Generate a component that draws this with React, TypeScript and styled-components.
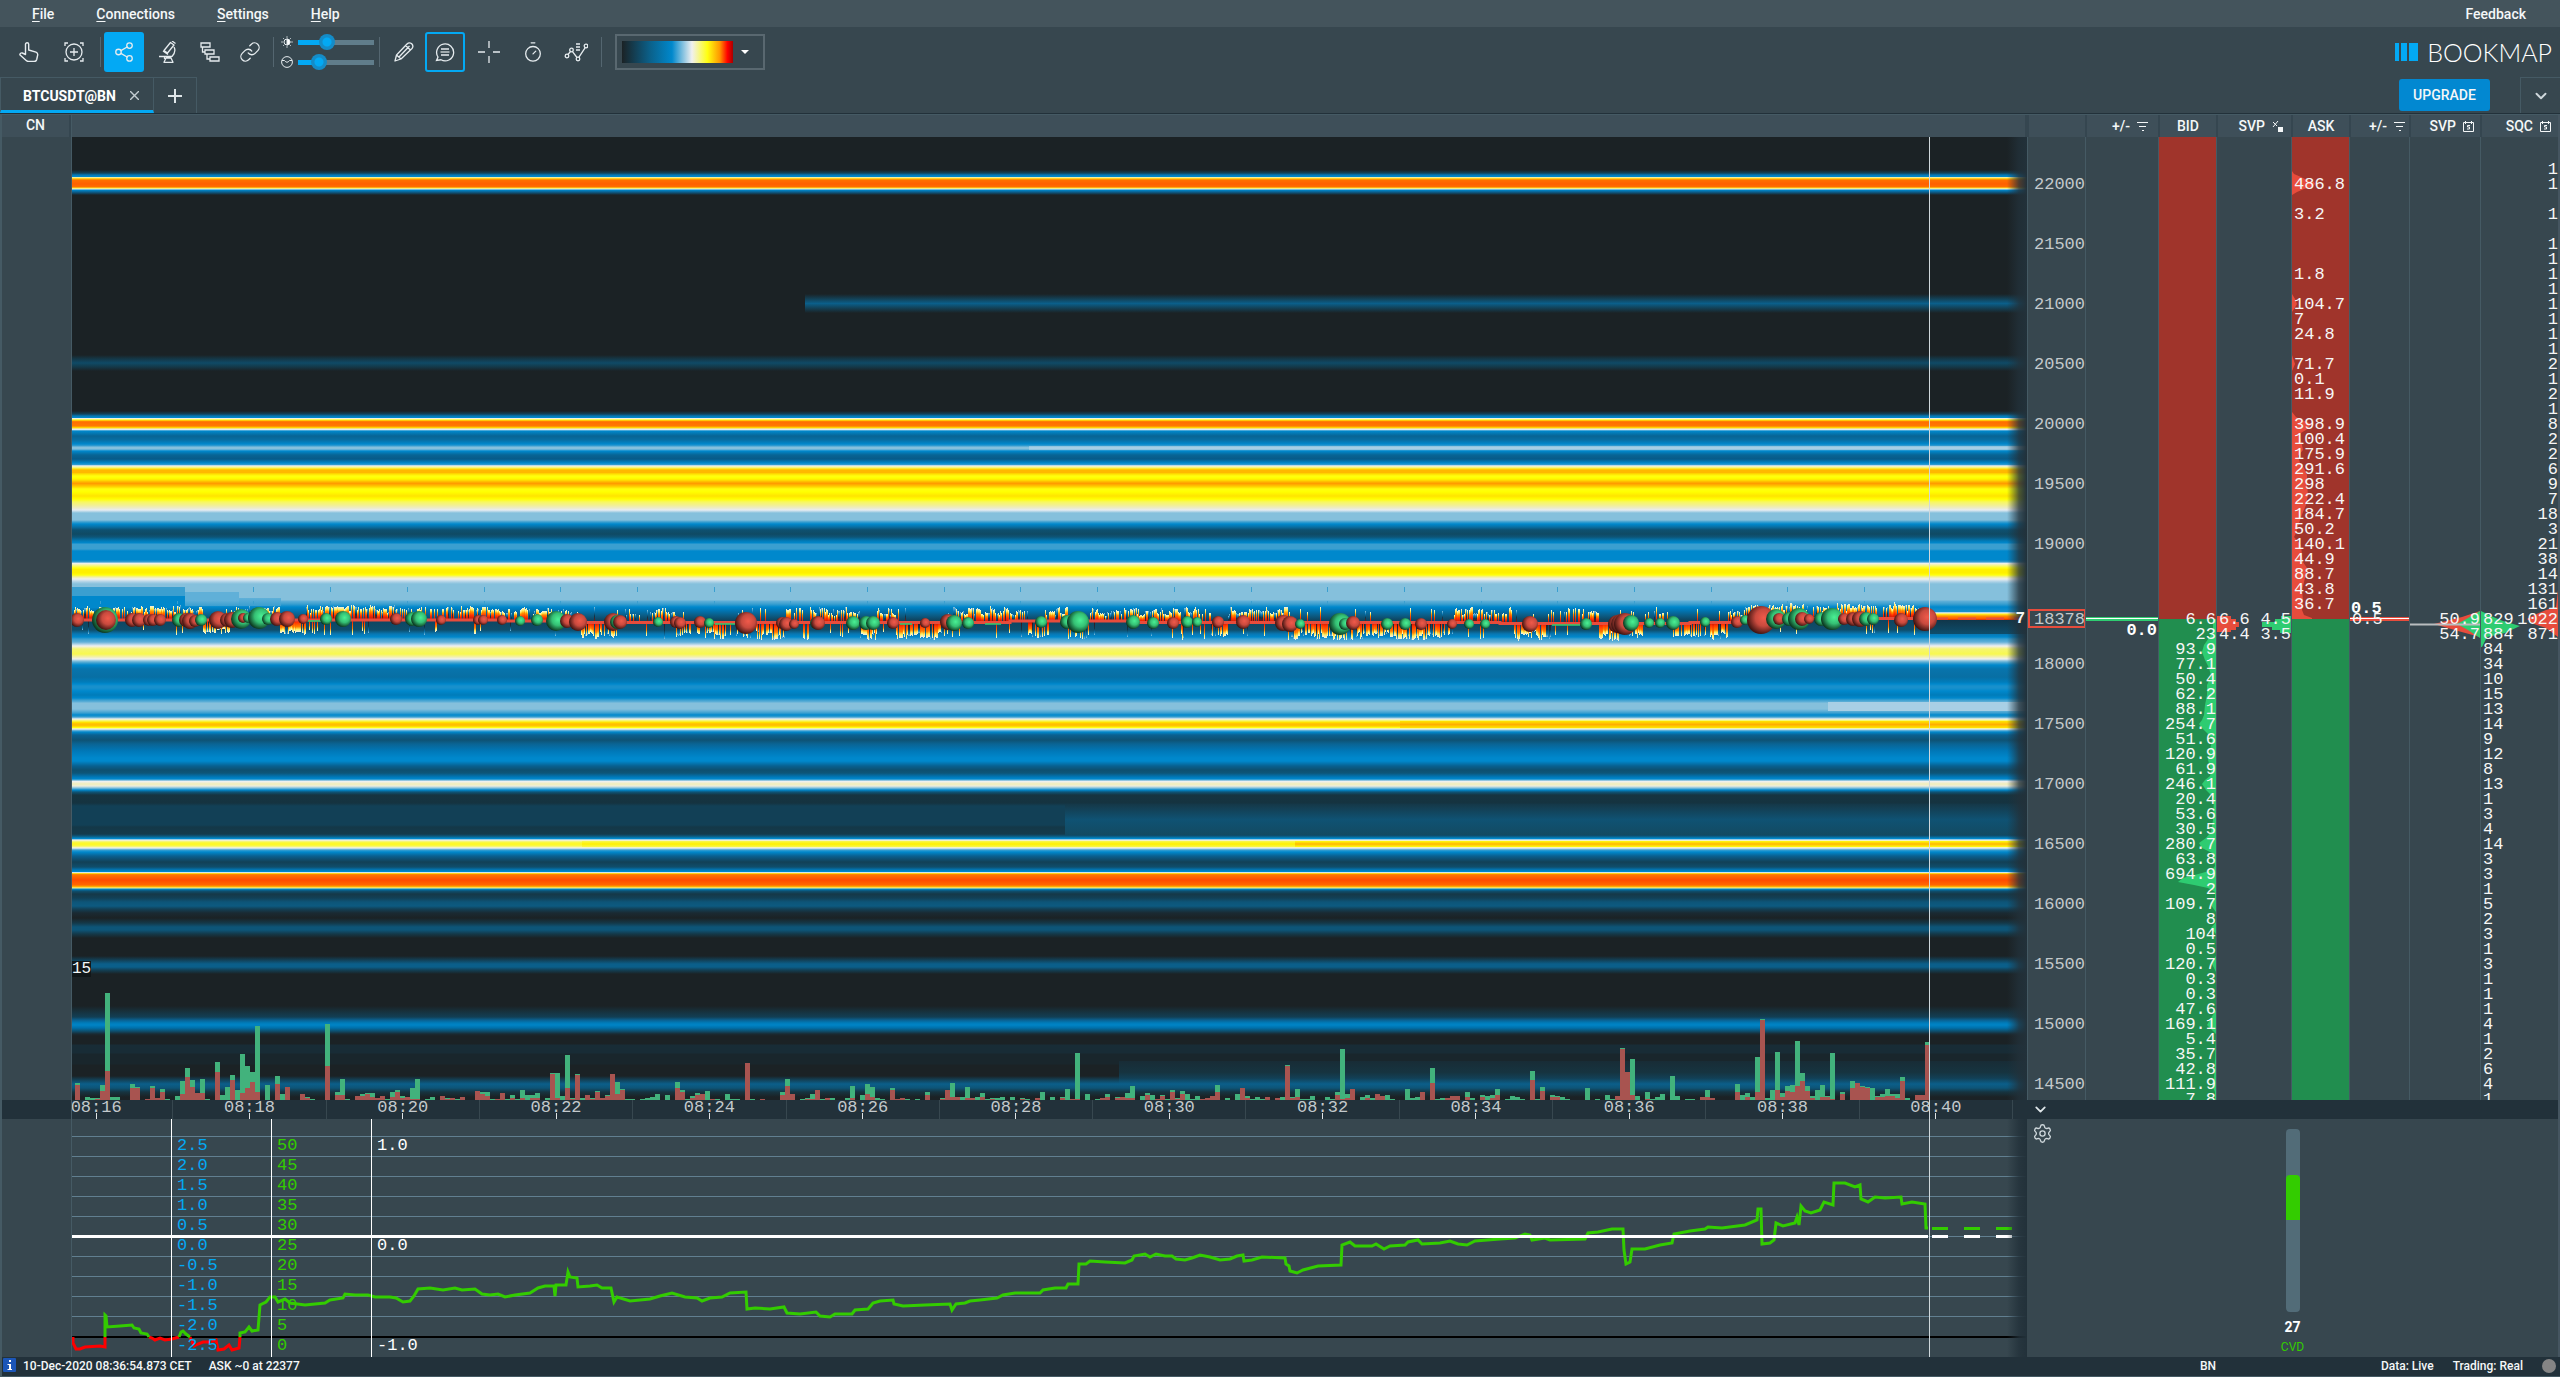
import React from "react";
import styled, { createGlobalStyle, css } from "styled-components";
import { ChevronDown, Link, Share2, Timer, Settings } from "lucide-react";

const color = {
  base: "#37474f",
  menu: "#44545c",
  head: "#3e4f59",
  deep: "#22313a",
  line: "#455a64",
  text: "#f4f7f8",
  dim: "#c3c9cc",
  accent: "#03a9f4",
  red: "#e74c3c",
  redDark: "#a0342b",
  green: "#2ecc71",
  greenDark: "#218e4f",
  cvd: "#33cc00",
};

const mono = `"Liberation Mono", "Courier New", monospace`;
const PRICE_W = 58;
const COLS = [58, 73, 58, 75, 58, 60, 71, 80];

const GlobalStyle = createGlobalStyle`
  * { box-sizing: border-box; }
  body { margin: 0; background: ${color.base}; color: ${color.text}; font: 500 14px/16px Roboto, sans-serif; overflow: hidden; }
  button { font: inherit; color: inherit; background: none; border: 0; padding: 0; cursor: pointer; }
  svg { display: block; }
`;

const Page = styled.div`
  display: flex;
  flex-direction: column;
  height: 100vh;
  background: ${color.base};
`;

const MenuBar = styled.nav`
  display: flex;
  align-items: center;
  height: 27px;
  padding: 0 34px 0 32px;
  gap: 42px;
  background: ${color.menu};
`;
const MenuItem = styled.button<{ $end?: boolean }>`
  margin-left: ${(p) => (p.$end ? "auto" : "0")};
  u { text-underline-offset: 2px; }
`;

const Toolbar = styled.div`
  display: flex;
  align-items: center;
  justify-content: space-between;
  height: 50px;
  padding: 0 8px;
`;
const Tools = styled.div`
  display: flex;
  align-items: center;
`;
const Tool = styled.button<{ $state?: "filled" | "outlined"; $wide?: number }>`
  display: flex;
  align-items: center;
  justify-content: center;
  width: ${(p) => p.$wide ?? 42}px;
  height: 40px;
  color: #e6ecef;
  ${(p) => p.$state && css`width: 40px; border-radius: 3px;`}
  ${(p) => p.$state === "filled" && css`background: ${color.accent};`}
  ${(p) => p.$state === "outlined" && css`border: 2px solid ${color.accent};`}
`;
const Divider = styled.span`
  width: 1px;
  height: 30px;
  margin: 0 3px;
  background: #546670;
`;
const Sliders = styled.div`
  display: flex;
  flex-direction: column;
  gap: 4px;
  padding: 0 2px 0 4px;
`;
const SliderRow = styled.label`
  display: flex;
  align-items: center;
  gap: 5px;
  height: 16px;
`;
const Range = styled.input<{ $fill: number }>`
  appearance: none;
  width: 76px;
  height: 16px;
  margin: 0;
  background: linear-gradient(90deg, ${color.accent} ${(p) => p.$fill}%, #607d8b ${(p) => p.$fill}%) center / 100% 5px no-repeat;
  &::-webkit-slider-thumb {
    appearance: none;
    width: 16px;
    height: 16px;
    border-radius: 50%;
    background: radial-gradient(circle, ${color.accent} 0 4px, #148cc8 5px);
  }
`;
const Palette = styled.button`
  display: flex;
  align-items: center;
  gap: 8px;
  width: 150px;
  height: 36px;
  margin-left: 10px;
  padding: 0 5px;
  border: 2px solid #596870;
`;
const PaletteScale = styled.span`
  width: 111px;
  height: 22px;
  background: linear-gradient(90deg, #1b2225, #0b6089 25%, #0088cc 45%, #f0f0f0 63%, #ffff10 77%, #ff9800 88%, #ff0000 95%, #a80000);
`;
const Caret = styled.span`
  border: 4px solid transparent;
  border-top-color: #fff;
  border-bottom: 0;
`;
const Logo = styled.div`
  display: flex;
  align-items: center;
  gap: 8px;
  font: 300 25px/30px Lato, sans-serif;
  color: #fff;
`;

const TabRow = styled.div`
  display: flex;
  align-items: stretch;
  height: 37px;
  border-bottom: 1px solid ${color.deep};
`;
const Tab = styled.div`
  display: flex;
  align-items: center;
  justify-content: space-between;
  width: 154px;
  padding: 3px 14px 0 22px;
  border: 1px solid ${color.line};
  border-bottom: 3px solid ${color.accent};
  font-weight: 700;
  color: #fff;
`;
const TabClose = styled.button`color: #c3cdd2;`;
const AddTab = styled.button`
  display: flex;
  align-items: center;
  justify-content: center;
  width: 43px;
  border: 1px solid ${color.line};
  border-width: 1px 1px 0 0;
`;
const TabActions = styled.div`
  display: flex;
  gap: 30px;
  margin-left: auto;
`;
const Upgrade = styled.button`
  width: 91px;
  height: 32px;
  margin-top: 2px;
  border-radius: 3px;
  background: #0288d1;
`;
const MoreTabs = styled.button`
  display: flex;
  align-items: center;
  justify-content: center;
  width: 40px;
  border: 1px solid ${color.line};
  border-width: 1px 0 0 1px;
`;

const Workspace = styled.main`
  flex: 1;
  display: grid;
  grid-template: minmax(0, 1fr) 257px / 70px minmax(0, 1fr) 533px;
  min-height: 0;
  border-left: 2px solid ${color.line};
  border-top: 1px solid ${color.line};
`;
const HeaderBar = styled.div`
  height: 22px;
  border-right: 2px solid #354650;
  background: ${color.head};
  text-align: center;
  line-height: 20px;
`;
const Notes = styled.section`
  border-right: 1px solid ${color.line};
`;
const ChartPane = styled.section`
  position: relative;
  display: flex;
  flex-direction: column;
  min-height: 0;
`;
const Plot = styled.svg`
  flex: 1;
  width: 100%;
  min-height: 0;
`;
const Fade = styled.span`
  position: absolute;
  inset: 0 0 0 auto;
  width: 20px;
  background: linear-gradient(90deg, transparent, #22313acc 60%, ${color.deep});
`;
const UpperFade = styled(Fade)`top: 22px;`;
const NowLine = styled.span`
  position: absolute;
  inset: 0 97px 0 auto;
  width: 1px;
  background: #cfd8dc;
`;
const UpperNow = styled(NowLine)`top: 22px;`;
const VolumeMax = styled.span`
  position: absolute;
  left: 0;
  bottom: 123px;
  background: #111719;
  font: 400 16px/16px ${mono};
`;
const LastSize = styled.span`
  position: absolute;
  right: 2px;
  top: 496px;
  font: 700 16px/16px ${mono};
`;

const TimeGutter = styled.div`
  height: 19px;
  background: ${color.deep};
`;
const TimeAxis = styled.div`
  flex: none;
  height: 19px;
  overflow: hidden;
  background: ${color.deep};
`;
const TimeCells = styled.div`
  display: grid;
  grid-template-columns: repeat(13, 1fr);
  height: 100%;
  margin: 0 14px 0 -52px;
`;
const TimeCell = styled.time`
  display: flex;
  justify-content: center;
  border-right: 1px solid #37474f;
  background: linear-gradient(#dfe4e6, #dfe4e6) center bottom / 1px 6px no-repeat;
  font: 400 17px/15px ${mono};
  color: ${color.dim};
`;

const Lower = styled.section`
  position: relative;
  display: flex;
  flex-direction: column;
  min-height: 0;
`;
const Indicator = styled.div`
  position: relative;
  flex: 1;
  display: flex;
  min-height: 0;
`;
const Scales = styled.div`
  position: absolute;
  inset: 0 auto 0 99px;
  display: flex;
`;
const Scale = styled.ol<{ $color: string; $step: number }>`
  width: 100px;
  margin: 0;
  padding: 17px 0 0 5px;
  border-left: 1px solid #fff;
  list-style: none;
  font: 400 17px/20px ${mono};
  color: ${(p) => p.$color};
  li { height: ${(p) => p.$step}px; }
`;

const Ladder = styled.section`
  position: relative;
  overflow: hidden;
  min-height: 0;
  border-right: 2px solid #455560;
`;
const Columns = styled.div`
  position: absolute;
  inset: 22px 0 0 0;
  display: flex;
`;
const ColumnBack = styled.div<{ $w: number; $book?: boolean }>`
  position: relative;
  flex: none;
  width: ${(p) => p.$w}px;
  border-left: 1px solid ${color.line};
  background: ${(p) => (p.$book ? `linear-gradient(${color.redDark} 482px, ${color.greenDark} 482px)` : "none")};
`;
const Profile = styled.svg`
  width: 100%;
  height: 963px;
`;
const Book = styled.table`
  position: relative;
  width: 531px;
  table-layout: fixed;
  border-collapse: collapse;
`;
const Th = styled.th<{ $center?: boolean; $end?: number }>`
  height: 22px;
  padding: 0 ${(p) => p.$end ?? 8}px 0 0;
  border-left: 2px solid #354650;
  background: ${color.head};
  font-weight: 500;
  line-height: 20px;
  text-align: ${(p) => (p.$center ? "center" : "right")};
  ${(p) => p.$center && css`padding: 0;`}
  span { display: inline-flex; align-items: center; gap: 7px; vertical-align: top; }
`;
const Gap = styled.td`height: 25px; padding: 0;`;
const Td = styled.td<{ $align?: string; $dim?: boolean }>`
  height: 15px;
  padding: 0 1px 0 2px;
  font: 400 17px/15px ${mono};
  text-align: ${(p) => p.$align ?? "right"};
  color: ${(p) => (p.$dim ? color.dim : "#f6f6f6")};
  white-space: nowrap;
`;
const Pair = styled.div`
  display: flex;
  justify-content: space-between;
`;
const Marker = styled.div<{ $line: string }>`
  position: absolute;
  top: 480px;
  left: 0;
  width: 100%;
  height: 4px;
  border: solid ${(p) => p.$line};
  border-width: 1px 0 2px;
  background: #fff;
`;
const Delta = styled.strong<{ $side: "left" | "right"; $top: number }>`
  position: absolute;
  ${(p) => p.$side}: 1px;
  top: ${(p) => p.$top}px;
  font: 700 17px/16px ${mono};
  color: #fff;
`;
const PriceBox = styled.span`
  position: absolute;
  top: 472px;
  left: 0;
  width: ${PRICE_W}px;
  height: 19px;
  border: 2px solid ${color.red};
`;

const Widgets = styled.section`
  display: flex;
  flex-direction: column;
  border-right: 2px solid #455560;
`;
const WidgetBar = styled.div`
  display: flex;
  align-items: center;
  height: 19px;
  padding-left: 5px;
  background: ${color.deep};
`;
const WidgetBody = styled.div`
  display: grid;
  grid-template-columns: 30px 1fr 30px;
  flex: 1;
  padding-top: 10px;
`;
const Gear = styled.button`
  align-self: start;
  margin: -6px 0 0 5px;
  color: #cfd8dc;
`;
const GaugeBox = styled.div`
  display: flex;
  flex-direction: column;
  align-items: center;
`;
const GaugeTrack = styled.div`
  display: flex;
  flex-direction: column;
  width: 14px;
  height: 183px;
  padding-top: 46px;
  border-radius: 4px;
  background: #526c78;
`;
const GaugeFill = styled.div`
  height: 45px;
  border-radius: 4px 4px 0 0;
  background: ${color.cvd};
`;
const GaugeValue = styled.strong`
  margin-top: 7px;
  color: #fff;
`;
const GaugeName = styled.span`
  margin-top: 4px;
  font: 400 12px/16px Roboto, sans-serif;
  color: ${color.cvd};
`;

const StatusBar = styled.footer`
  display: grid;
  grid-template-columns: minmax(0, 1fr) 533px;
  align-items: center;
  height: 20px;
  padding-bottom: 2px;
  border: solid ${color.line};
  border-width: 0 0 1px 2px;
  background: ${color.deep};
  font-size: 12px;
  line-height: 16px;
`;
const StatusLeft = styled.div`
  display: flex;
  align-items: center;
  gap: 17px;
  padding-left: 1px;
`;
const Stamp = styled.span`
  display: flex;
  gap: 7px;
`;
const StatusRight = styled.div`
  display: flex;
  align-items: center;
  gap: 19px;
  padding: 0 4px 0 173px;
`;
const Feed = styled.span`margin-right: auto;`;
const Light = styled.span`
  width: 14px;
  height: 14px;
  border-radius: 50%;
  background: #858585;
`;

/* ---------- heat map data ---------- */

const K = "#1b2225", B = "#0088cc", D = "#0d5578", L = "#85c0dc", M = "#3a9fd0", W = "#f0f0f0", Y = "#ffff10";

type Stop = [number, string];
const HEAT: Stop[] = [
  [137, K], [170, K], [173, "#12435a"], [175, "#0878b4"], [176.5, B], [177, W], [178, "#ffe840"], [179, "#ffb400"], [180, "#ff7000"],
  [184, "#ff6000"], [187, "#ff7000"], [188, "#ffe820"], [189, W], [190, B], [192, "#0a6090"], [195, K],
  [355, K], [359, "#143848"], [363, "#0f4a66"], [367, "#143848"], [371, K],
  [411, K], [414, "#12435a"], [416, "#0878b4"], [417.6, B], [418.4, W], [420, Y], [421, "#ff9000"], [422, "#ff6e00"], [426, "#ff7a00"],
  [427.5, "#ffd000"], [429.4, W], [431, B], [436, "#086494"], [440, "#086fa4"], [444, B], [446, M], [447, L], [449, L], [451, B],
  [455, "#086494"], [459, "#085a88"], [463, B], [465, M], [465.7, W], [468, "#f8f860"], [469, "#ffd800"], [470.5, "#ffb800"], [472.5, "#ffb800"], [474, "#ffe000"],
  [476, Y], [478, "#ffff00"], [480, "#ffe400"], [482, "#ffb400"], [483.5, "#ff9c00"], [485, "#ffb400"], [487, "#ffd800"], [489, Y],
  [492, "#ffff00"], [496, "#ffe400"], [499, "#ffff00"], [502, "#f8f860"], [505, "#f2f090"], [508, "#ecebc8"], [510, "#e8edf2"],
  [513, L], [520, L], [522, M], [524, B], [527, "#086fa4"], [530, "#0d5070"], [534, "#0f4a64"], [537, D], [541, "#007cba"], [543, B],
  [544, M], [549, M], [551, B], [560, B], [562, M], [563.3, W], [566, "#f8f870"], [568, Y], [569.5, "#fff000"], [573, "#fff000"], [575, Y],
  [577, "#f2f0a0"], [579, W], [582, "#a8cfe5"], [584, L], [600, L], [601, "#60b0d8"], [604, M], [607, B], [610, "#0078b8"], [615, "#0a5f8a"],
  [620, "#0f4560"], [630, "#0e4e6c"], [634, "#0878b4"], [637, B], [639, M], [642, "#60b0d8"], [644, "#a8cfe5"], [646, W], [649, "#f5f570"],
  [654, "#f8f850"], [657, "#f2f0b0"], [659, W], [661, L], [663, M], [665, B], [669, "#0874ac"], [677, "#086fa4"], [682, "#007cba"], [684, B],
  [686, "#1890cc"], [688, "#1890cc"], [691, B], [695, "#007cba"], [698, B], [700, M], [702, "#60b0d8"], [703, L], [709, L], [711, "#60b0d8"], [713, M], [715, B],
  [717, M], [719, W], [721, "#f8f850"], [722.5, "#ffe000"], [724, "#ffbc00"], [726, "#ffc800"], [727.5, Y], [729, W], [730.5, "#60b0d8"], [732, B],
  [735, "#0a6090"], [740, "#0e5274"], [744, "#0a6494"], [751, "#0078b8"], [758, B], [761, B], [766, "#086090"], [770, "#0d5070"], [773, D],
  [777, "#0078b8"], [779, B], [780, "#60b0d8"], [781.4, W], [784, "#f2eeb8"], [786, "#eeeedd"], [788, L], [790, B], [792, D], [795, "#163440"],
  [803, "#153340"], [806, "#124056"], [825, "#124056"], [827, "#143848"], [834, "#143a4c"], [836, D], [838.5, B], [840, W], [842, "#f8f850"],
  [844, "#fff820"], [846, "#f8f850"], [848, W], [850, M], [852, B], [856, "#0a6090"], [862, "#124056"], [867, "#0f4e6c"], [870, "#0078b8"], [871.6, B],
  [872.6, W], [873.6, "#ffd000"], [874.6, "#ff7800"], [880, "#ff4c00"], [885, "#ff6800"], [886.6, "#ffb000"], [888, "#f5f090"], [889, B],
  [891, "#0d5070"], [894, "#153848"], [898, "#124056"], [902, "#0d5578"], [906, "#0d5a80"], [909, "#124056"], [913, "#1a2a32"], [918, K],
  [923, "#143848"], [927, "#0d5578"], [930, "#0d5578"], [934, "#143848"], [938, K], [956, K], [960, "#124056"], [964, "#0b5f8a"], [967, "#0b5f8a"],
  [970, "#124056"], [974, K], [1006, K], [1011, "#17303b"], [1017, "#123f55"], [1020, "#0a6090"], [1023, "#007cba"], [1025, "#0084c6"],
  [1028, "#0070aa"], [1031, "#0d5070"], [1034, "#1a2a32"], [1036, K], [1044, K], [1045, "#182c36"], [1053, "#182c36"], [1054, "#19262c"],
  [1064, "#19262c"], [1065, K], [1076, K], [1079, "#143a4c"], [1084, "#0b5f8a"], [1088, "#0d5578"], [1092, "#163440"], [1097, K], [1100, K],
];

type Patch = { x: number; w: number; y: number; h: number; stops: Stop[] };
const PATCHES: Patch[] = [
  { x: 805, w: 1222, y: 294, h: 19, stops: [[0, K], [0.25, "#134055"], [0.5, "#0b5f8a"], [0.75, "#134055"], [1, K]] },
  { x: 72, w: 113, y: 587, h: 9, stops: [[0, M], [1, M]] },
  { x: 72, w: 113, y: 596, h: 12, stops: [[0, B], [1, B]] },
  { x: 185, w: 54, y: 592, h: 14, stops: [[0, "#60b0d8"], [0.6, "#60b0d8"], [1, M]] },
  { x: 239, w: 42, y: 598, h: 8, stops: [[0, "#60b0d8"], [1, M]] },
  { x: 1065, w: 962, y: 804, h: 31, stops: [[0, "#153848"], [0.5, "#0f5273"], [1, "#134a62"]] },
  { x: 582, w: 1445, y: 841, h: 6, stops: [[0, "#f8f850"], [0.5, "#fff000"], [1, "#f8f850"]] },
  { x: 1295, w: 732, y: 841, h: 6, stops: [[0, Y], [0.5, "#ffb800"], [1, Y]] },
  { x: 1400, w: 627, y: 721, h: 7, stops: [[0, "#ffe800"], [0.5, "#ffae00"], [1, "#ffe800"]] },
  { x: 1029, w: 998, y: 446, h: 4, stops: [[0, L], [0.5, "#b0d4e8"], [1, L]] },
  { x: 1828, w: 199, y: 702, h: 9, stops: [[0, "#a8cfe5"], [1, "#a8cfe5"]] },
  { x: 1119, w: 908, y: 1061, h: 23, stops: [[0, "#182c36"], [0.5, "#163440"], [0.75, "#124056"], [1, "#0b5f8a"]] },
  { x: 1930, w: 97, y: 607, h: 13, stops: [[0, B], [0.35, "#1890cc"], [0.45, W], [0.55, "#ffee20"], [0.7, "#ff9000"], [0.95, "#ff4c00"], [1, "#8a1008"]] },
  { x: 1930, w: 97, y: 620, h: 14, stops: [[0, "#10364a"], [1, "#0e4e6c"]] },
];

/* price line: level drifts down after 08:22 and recovers after 08:37 */
const priceAt = (x: number) => (x < 500 ? 619 : x < 585 ? 621 : x < 1745 ? 622 : 618);

const makeRandom = (seed: number) => () => {
  seed = (seed * 1664525 + 1013904223) % 4294967296;
  return seed / 4294967296;
};

type Streak = { x: number; y: number; w: number; h: number; fill: string };
const STREAKS: Streak[] = (() => {
  const rnd = makeRandom(41);
  const out: Streak[] = [];
  let x = 74;
  while (x < 1926) {
    const run = 5 + rnd() * 24;
    const dense = rnd() > 0.3 ? 0.95 : 0.5;
    const above = rnd() > (x < 560 || x > 1745 ? 0.2 : 0.5);
    let level = 8 + rnd() * 4;
    for (let end = Math.min(x + run, 1926); x < end; x += 1) {
      if (rnd() > dense) continue;
      const y = priceAt(x);
      const up = rnd() > 0.06 ? above : !above;
      if (rnd() > 0.6) level = 6 + rnd() * (x < 560 ? 6 : 8);
      const h = Math.round(level + rnd() * 2);
      const cool = rnd() > 0.78;
      out.push({ x: Math.round(x), w: 1, y: up ? y - h : y, h: up ? h : h + 3, fill: up ? (cool ? "coolUp" : "hotUp") : cool ? "coolDown" : "hotDown" });
    }
  }
  return out;
})();

/* x, y, radius, side: trades drawn as spheres */
type Ball = [number, number, number, "r" | "g"];
const BALLS: Ball[] = [
  [77, 620, 7, "r"], [105, 620, 13, "g"], [106, 620, 10, "r"], [132, 620, 7, "r"], [139, 620, 7, "r"], [149, 620, 6, "r"], [153, 620, 6, "r"], [160, 620, 6, "r"],
  [179, 620, 7, "g"], [186, 620, 7, "r"], [190, 621, 8, "r"], [195, 621, 6, "r"], [201, 620, 6, "g"], [218, 620, 9, "r"], [227, 620, 7, "r"], [232, 620, 8, "r"],
  [241, 619, 10, "g"], [243, 618, 5, "r"], [248, 618, 5, "g"], [259, 618, 11, "g"], [268, 619, 6, "g"], [277, 619, 7, "r"], [287, 619, 8, "r"], [303, 619, 5, "r"],
  [326, 619, 6, "g"], [343, 619, 8, "g"], [396, 619, 6, "r"], [412, 619, 7, "g"], [419, 619, 8, "g"], [441, 620, 5, "r"], [478, 620, 5, "r"], [483, 620, 5, "r"],
  [502, 620, 5, "r"], [520, 621, 5, "g"], [537, 620, 6, "g"], [556, 621, 10, "g"], [567, 621, 7, "r"], [578, 622, 9, "r"], [613, 622, 9, "r"], [617, 622, 7, "g"],
  [620, 622, 7, "r"], [658, 622, 5, "g"], [676, 622, 6, "r"], [680, 623, 6, "r"], [700, 622, 6, "r"], [709, 623, 5, "g"], [746, 623, 11, "r"], [782, 623, 6, "r"],
  [786, 624, 7, "r"], [794, 624, 5, "r"], [816, 623, 6, "g"], [818, 623, 7, "r"], [853, 623, 7, "g"], [866, 623, 7, "g"], [873, 623, 7, "g"], [893, 623, 6, "r"],
  [925, 623, 5, "r"], [948, 622, 8, "r"], [954, 623, 8, "g"], [968, 623, 6, "g"], [1041, 622, 6, "g"], [1067, 622, 7, "g"], [1078, 622, 11, "g"], [1133, 622, 7, "g"],
  [1153, 623, 6, "g"], [1173, 623, 6, "r"], [1187, 622, 6, "g"], [1197, 622, 5, "g"], [1218, 622, 6, "r"], [1243, 622, 7, "r"], [1283, 623, 8, "r"], [1290, 624, 8, "r"],
  [1300, 624, 5, "g"], [1340, 624, 11, "g"], [1345, 624, 6, "g"], [1353, 623, 7, "r"], [1387, 624, 6, "g"], [1405, 624, 6, "g"], [1421, 624, 6, "r"], [1452, 624, 5, "r"],
  [1469, 624, 5, "g"], [1485, 624, 5, "g"], [1530, 624, 8, "r"], [1586, 624, 6, "g"], [1617, 624, 9, "r"], [1621, 624, 10, "r"], [1625, 624, 11, "r"], [1631, 623, 8, "g"],
  [1649, 623, 5, "g"], [1660, 623, 5, "g"], [1673, 623, 7, "g"], [1705, 622, 5, "g"], [1737, 622, 6, "r"], [1745, 620, 5, "g"], [1761, 620, 14, "r"], [1776, 619, 10, "g"],
  [1779, 619, 6, "r"], [1789, 619, 7, "g"], [1799, 619, 11, "g"], [1802, 619, 7, "r"], [1809, 619, 5, "r"], [1821, 619, 7, "g"], [1832, 619, 11, "g"], [1844, 619, 6, "r"],
  [1853, 619, 7, "r"], [1860, 619, 8, "r"], [1866, 619, 7, "g"], [1873, 619, 6, "g"], [1901, 620, 7, "r"], [1925, 619, 12, "r"],
];

/* x:total height:sell height, five-second buckets */
const VOLUME = `75:17:15 85:3:0 90:2:0 95:2:1 100:15:9 105:107:29 110:3:0 115:3:0 130:16:12 135:13:12 145:1:1 150:14:12 155:2:2 160:11:8 165:1:0 175:4:0 180:19:6 185:32:23
190:20:13 195:7:7 200:21:7 205:1:0 215:38:28 220:5:0 225:13:0 230:25:20 235:10:0 240:46:7 245:34:12 250:28:18 255:74:8 265:15:0 275:24:16 280:6:0 285:13:13 300:6:6 305:3:2 310:1:0
325:76:34 335:8:5 340:21:5 345:1:0 355:4:4 360:6:4 365:7:6 370:7:3 375:2:2 380:4:4 385:1:0 390:8:3 395:10:8 400:4:2 405:3:3 410:12:1 415:21:1 425:1:0 430:3:0 440:4:4 445:2:1 450:2:2 455:1:0
460:3:3 475:9:9 480:8:6 485:8:4 490:1:0 495:1:1 500:7:7 505:1:0 510:5:2 515:1:0 520:10:2 525:5:0 530:5:2 535:7:2 545:2:0 550:27:26 555:27:2 560:4:0 565:45:12 570:2:1 575:26:25 580:2:0 585:5:5
590:2:1 595:9:8 600:2:2 605:5:4 610:26:26 615:18:6 620:11:10 625:1:0 630:1:0 640:1:0 645:2:0 650:3:0 655:6:0 665:5:0 675:18:12 680:10:8 685:1:0 690:4:2 695:7:5 700:6:6 705:9:0 710:1:1 715:1:0
725:6:0 730:1:0 735:1:0 745:37:37 750:1:0 760:1:1 780:8:5 785:21:14 790:6:6 800:1:0 805:2:1 810:6:1 815:10:10 820:1:0 825:2:2 830:2:0 845:2:0 850:14:2 860:5:0 865:16:6 870:13:3 875:2:0 880:1:0
890:12:10 895:1:1 900:2:2 905:1:0 915:1:0 925:8:5 940:2:1 945:10:10 950:17:3 955:3:3 960:3:0 965:13:2 970:2:2 975:3:0 980:7:3 985:1:0 990:2:1 995:2:0 1000:3:0 1010:3:0 1020:2:1 1025:1:0 1035:2:2
1040:8:0 1050:3:0 1060:3:2 1065:11:0 1070:1:1 1075:47:1 1085:6:0 1095:1:0 1100:2:2 1105:6:3 1115:3:2 1120:3:3 1125:7:2 1130:14:2 1140:4:0 1145:7:5 1150:5:0 1155:1:1 1160:5:4 1165:1:0 1170:10:8
1175:2:1 1180:9:6 1185:6:0 1190:1:0 1195:4:0 1200:1:1 1205:2:2 1210:4:4 1215:15:8 1225:2:0 1235:6:0 1240:12:12 1245:4:2 1250:1:0 1255:3:0 1260:1:0 1265:3:3 1275:2:2 1280:3:0 1285:35:34 1290:3:2
1295:11:3 1300:1:0 1305:1:0 1310:4:0 1325:3:0 1330:1:0 1335:8:5 1340:51:1 1345:6:2 1350:11:11 1360:3:0 1365:5:2 1370:2:0 1375:6:6 1380:4:4 1385:5:0 1390:1:0 1405:11:0 1410:2:0 1415:3:0 1420:8:8
1430:32:17 1435:1:0 1440:2:0 1445:2:2 1450:4:4 1455:4:4 1465:8:3 1470:2:0 1480:5:3 1485:4:0 1490:5:2 1495:11:5 1505:1:0 1510:4:0 1515:3:0 1520:1:0 1530:29:20 1535:1:0 1540:13:9 1550:5:3 1555:4:3
1560:3:0 1565:1:0 1585:12:0 1595:1:0 1605:5:0 1610:1:0 1615:4:4 1620:52:51 1625:28:28 1630:41:5 1635:4:0 1645:8:1 1650:1:0 1655:3:0 1660:6:0 1670:24:0 1675:4:0 1685:1:0 1690:1:0 1700:3:3 1705:10:3
1710:2:2 1735:16:8 1740:5:0 1745:7:3 1750:3:0 1755:43:8 1760:81:80 1765:2:0 1770:10:0 1775:48:10 1780:7:3 1785:14:9 1790:15:8 1795:59:14 1800:27:19 1805:14:9 1810:4:2 1815:10:0 1820:15:3 1825:4:3
1830:47:1 1840:8:6 1850:19:12 1855:17:17 1860:14:13 1865:13:12 1870:12:0 1875:4:3 1880:6:3 1885:11:4 1890:6:4 1895:6:2 1900:23:19 1905:2:0 1915:5:5 1920:5:5 1925:58:55`
  .split(/\s+/)
  .map((s) => s.split(":").map(Number));

const CVD_GREEN = [
  "105,1337 105,1315 106,1316 107,1327 120,1326 132,1325 134,1328 139,1329 141,1333 147,1334 149,1337",
  "179,1337 181,1332 183,1331 186,1334 190,1337",
  "240,1337 240,1333 245,1332 249,1327 252,1331 258,1330 260,1305 266,1302 270,1297 275,1297 278,1302 285,1299 290,1303 305,1305 325,1303 330,1300 343,1298 345,1294 355,1295 368,1295 375,1297 390,1297 396,1298 403,1302 410,1301 414,1296 418,1289 430,1288 443,1290 455,1288 462,1290 475,1289 482,1294 490,1295 498,1294 505,1297 515,1295 530,1293 538,1288 545,1286 554,1286 555,1296 556,1285 566,1285 568,1272 570,1277 577,1278 578,1287 590,1286 597,1285 602,1288 611,1288 614,1302 617,1297 630,1301 650,1299 660,1296 672,1293 685,1297 697,1298 702,1301 710,1298 722,1297 730,1293 746,1292 747,1309 755,1308 770,1309 784,1307 787,1313 800,1314 816,1312 820,1316 830,1317 835,1314 852,1314 855,1310 868,1309 873,1303 880,1301 893,1300 894,1304 903,1306 925,1305 950,1304 952,1310 956,1304 965,1303 970,1301 980,1300 997,1298 1003,1295 1015,1293 1040,1293 1043,1290 1055,1288 1066,1288 1068,1284 1078,1284 1079,1264 1086,1264 1090,1261 1105,1262 1125,1263 1132,1260 1134,1256 1145,1254 1150,1257 1156,1254 1165,1256 1172,1256 1176,1259 1185,1260 1192,1258 1200,1255 1210,1257 1220,1260 1230,1259 1237,1256 1243,1255 1244,1261 1252,1260 1262,1257 1285,1258 1286,1264 1289,1266 1290,1271 1297,1273 1303,1270 1318,1266 1341,1265 1342,1245 1350,1242 1355,1246 1372,1246 1376,1244 1384,1249 1390,1246 1405,1245 1408,1242 1418,1240 1422,1244 1440,1243 1450,1241 1458,1244 1467,1245 1475,1241 1500,1239 1515,1238 1525,1234 1530,1235 1532,1240 1545,1238 1550,1240 1585,1239 1588,1233 1598,1232 1612,1229 1623,1229 1624,1250 1626,1264 1630,1262 1632,1249 1645,1249 1660,1245 1672,1243 1674,1234 1690,1231 1705,1229 1708,1227 1722,1228 1745,1225 1757,1220 1758,1209 1761,1209 1762,1244 1770,1243 1774,1240 1776,1223 1783,1226 1795,1223 1797,1217 1799,1225 1801,1206 1805,1211 1811,1213 1820,1210 1824,1202 1833,1205 1834,1183 1845,1183 1855,1187 1860,1185 1861,1199 1868,1202 1875,1197 1885,1198 1901,1197 1902,1204 1912,1202 1925,1204 1926,1228 1928,1228",
];
const CVD_RED = [
  "73,1337 73,1343 76,1349 80,1349 85,1347 100,1346 105,1347 105,1337",
  "149,1337 152,1338 155,1340 160,1338 165,1340 172,1339 179,1337",
  "190,1337 194,1346 198,1344 203,1342 210,1342 216,1340 218,1350 224,1349 229,1345 232,1350 239,1348 240,1337",
];

const ramp = (id: string, stops: Stop[]) => (
  <linearGradient key={id} id={id} x1="0" y1="0" x2="0" y2="1">
    {stops.map(([o, c], i) => <stop key={i} offset={o} stopColor={c} />)}
  </linearGradient>
);

const HeatMap = () => (
  <Plot viewBox="72 137 1955 963" preserveAspectRatio="none" role="img" aria-label="Liquidity heat map">
    <defs>
      <linearGradient id="heat" gradientUnits="userSpaceOnUse" x1="0" y1="137" x2="0" y2="1100">
        {HEAT.map(([y, c], i) => <stop key={i} offset={(y - 137) / 963} stopColor={c} />)}
      </linearGradient>
      {PATCHES.map((p, i) => ramp(`patch${i}`, p.stops))}
      {ramp("hotUp", [[0, W], [0.2, "#fff060"], [0.4, "#ff9000"], [0.7, "#ff3000"], [1, "#c81408"]])}
      {ramp("hotDown", [[0, "#b01008"], [0.25, "#ff3000"], [0.6, "#ff8000"], [0.8, "#fff060"], [1, W]])}
      {ramp("coolUp", [[0, L], [0.3, "#0878b4"], [0.6, "#0f3548"], [1, "#8a1008"]])}
      {ramp("coolDown", [[0, "#401014"], [0.5, "#0f3548"], [0.8, "#0878b4"], [1, L]])}
      <radialGradient id="ballR" cx=".6" cy=".42" r=".6">
        <stop offset="0" stopColor="#f05a4a" /><stop offset=".5" stopColor="#c94a3e" /><stop offset="1" stopColor="#401512" />
      </radialGradient>
      <radialGradient id="ballG" cx=".6" cy=".42" r=".6">
        <stop offset="0" stopColor="#4af094" /><stop offset=".5" stopColor="#35c074" /><stop offset="1" stopColor="#0c3820" />
      </radialGradient>
    </defs>
    <rect x="72" y="137" width="1955" height="963" fill="url(#heat)" />
    {PATCHES.map((p, i) => <rect key={i} x={p.x} y={p.y} width={p.w} height={p.h} fill={`url(#patch${i})`} />)}
    {Array.from({ length: 24 }, (_, i) => (
      <g key={i} fill={M}>
        <rect x={100 + Math.round(i * 76.7)} y={587} width="1" height="5" />
        <rect x={100 + Math.round(i * 76.7)} y={601} width="1" height="3" />
      </g>
    ))}
    {STREAKS.map((s, i) => <rect key={i} x={s.x} y={s.y} width={s.w} height={s.h} fill={`url(#${s.fill})`} />)}
    <path d="M72 620H500V621H585V622.500H1010V621H1130V622.500H1500V623.500H1690V622.500H1745V618.500H1929" fill="none" stroke={color.red} strokeWidth="3" />
    <path d="M308 621h18M900 624h12M985 624h16M1552 625h28M715 624h20" stroke={color.green} strokeWidth="1.500" />
    <path d="M1930 618.500H2027" stroke={color.red} strokeWidth="2" strokeDasharray="18 10" />
    {BALLS.map(([x, y, r, s], i) => <circle key={i} cx={x} cy={y} r={r} fill={s === "r" ? "url(#ballR)" : "url(#ballG)"} />)}
    {VOLUME.map(([x, total, sell]) => (
      <g key={x}>
        <rect x={x} y={1100 - total} width="5" height={total - sell} fill="#42b27c" />
        <rect x={x} y={1100 - sell} width="5" height={sell} fill="#a85450" />
      </g>
    ))}
  </Plot>
);

const CvdPlot = () => (
  <Plot viewBox="72 1119 1955 238" preserveAspectRatio="none" role="img" aria-label="Cumulative volume delta">
    <g stroke="#617f90">
      {[1136, 1156, 1176, 1196, 1216, 1236, 1256, 1276, 1296, 1316].map((y) => <path key={y} d={`M72 ${y}.5H2027`} />)}
    </g>
    <path d="M72 1337H2027" stroke="#000" strokeWidth="2" />
    {CVD_RED.map((p) => <polyline key={p} points={p} fill="none" stroke="#ff0000" strokeWidth="3" />)}
    {CVD_GREEN.map((p) => <polyline key={p} points={p} fill="none" stroke={color.cvd} strokeWidth="3" />)}
    <path d="M72 1236.500H1928" stroke="#fff" strokeWidth="3" />
    <path d="M1932 1236.500H2012" stroke="#fff" strokeWidth="3" strokeDasharray="16 16" />
    <path d="M1932 1228.500H2012" stroke={color.cvd} strokeWidth="3" strokeDasharray="16 16" />
  </Plot>
);

/* ---------- order book data: one entry per ladder row ---------- */

const BLANK = "-";
const ask = "- 486.8 - 3.2 - - - 1.8 - 104.7 7 24.8 - 71.7 0.1 11.9 - 398.9 100.4 175.9 291.6 298 222.4 184.7 50.2 140.1 44.9 88.7 43.8 36.7".split(" ");
const bid = "6.6 23 93.9 77.1 50.4 62.2 88.1 254.7 51.6 120.9 61.9 246.1 20.4 53.6 30.5 280.7 63.8 694.9 2 109.7 8 104 0.5 120.7 0.3 0.3 47.6 169.1 5.4 35.7 42.8 111.9 7.8".split(" ");
const askCount = "1 1 - 1 - 1 1 1 1 1 1 1 1 2 1 2 1 8 2 2 6 9 7 18 3 21 38 14 131 161 1022 871".split(" ");
const bidCount = "829 884 84 34 10 15 13 14 9 12 8 13 1 3 4 14 3 3 1 5 2 3 1 3 1 1 1 4 1 2 6 4 1".split(" ");
const BEST = 30;
const val = (list: string[], i: number) => (list[i] && list[i] !== BLANK ? list[i] : "");

const rows = Array.from({ length: 63 }, (_, i) => {
  const atLabel = (i - 1) % 4 === 0;
  const price = 22000 - (i - 1) * 125;
  return {
    price: i === BEST ? "18378" : atLabel && i !== 29 ? String(price) : "",
    bid: val(bid, i - BEST),
    ask: val(ask, i),
    svp: i === BEST ? ["6.6", "4.5"] : i === BEST + 1 ? ["4.4", "3.5"] : null,
    change: i === BEST ? "0.5" : "",
    session: i === BEST ? "50.9" : i === BEST + 1 ? "54.7" : "",
    counts: [val(bidCount, i - BEST), val(askCount, i)],
  };
});

const profile = (pts: [number, number][], flipAt?: number) =>
  pts.map(([y, w]) => `${flipAt ? flipAt - w : w},${y - 137}`).join(" ");

const ASK_SHAPE: [number, number][] = [
  [171, 0], [174, 2], [177, 9], [180, 15], [182, 22], [184, 23], [187, 20], [189, 12], [192, 5], [195, 0], [294, 0], [299, 3], [304, 5], [309, 2], [312, 0], [355, 0], [364, 3], [371, 0],
  [412, 0], [417, 4], [420, 10], [424, 20], [430, 14], [434, 7], [440, 9], [450, 11], [456, 6], [463, 8], [468, 12], [475, 15], [485, 15], [495, 16], [505, 14], [512, 11], [520, 8], [533, 4], [537, 2],
  [545, 9], [555, 10], [562, 11], [568, 15], [578, 13], [590, 10], [600, 11], [610, 10], [615, 12], [618, 20], [619, 20], [619, 0],
];
const BID_SHAPE: [number, number][] = [
  [619, 0], [620, 3], [632, 3], [645, 12], [652, 14], [660, 11], [668, 7], [676, 5], [685, 9], [695, 9], [705, 11], [715, 12], [720, 14], [724, 17], [728, 14], [734, 8], [740, 4], [750, 6], [760, 8], [770, 5],
  [776, 6], [780, 11], [784, 14], [790, 10], [798, 2], [820, 3], [832, 5], [838, 10], [843, 17], [848, 14], [853, 4], [860, 2], [866, 1], [870, 4], [873, 14], [878, 33], [882, 38], [885, 22], [888, 8],
  [892, 1], [898, 1], [903, 6], [908, 3], [912, 0], [922, 0], [928, 5], [934, 0], [956, 0], [962, 5], [968, 2], [972, 0], [1010, 0], [1018, 5], [1025, 9], [1031, 3], [1034, 0], [1060, 1], [1078, 2], [1085, 4], [1092, 1], [1100, 1], [1100, 0],
];

const FilterIcon = () => (
  <svg width="11" height="11" viewBox="0 0 11 11" stroke="currentColor"><path d="M0 1.500h11M2 5.500h7M5 9.500h2" /></svg>
);
const CalendarIcon = () => (
  <svg width="11" height="11" viewBox="0 0 11 11" fill="none" stroke="currentColor">
    <path d="M.5 1.500h10v9H.5zM2.500 0v3M8.500 0v3M7 4.500H4.500v1.500h2V8H4" />
  </svg>
);
const CrossSquareIcon = () => (
  <svg width="11" height="11" viewBox="0 0 11 11" stroke="currentColor" fill="none">
    <path d="M1 1l4 4M6 0L1 6" /><rect x="6" y="6" width="5" height="5" fill="currentColor" stroke="none" />
  </svg>
);

const OrderBook = () => (
  <Ladder>
    <Columns>
      <ColumnBack $w={COLS[0]}><PriceBox /></ColumnBack>
      <ColumnBack $w={COLS[1]}>
        <Marker $line={color.green} />
        <Delta $side="right" $top={486}>0.0</Delta>
      </ColumnBack>
      <ColumnBack $w={COLS[2]} $book>
        <Profile><polygon points={profile(BID_SHAPE, 57)} fill={color.green} /></Profile>
      </ColumnBack>
      <ColumnBack $w={COLS[3]}>
        <Profile>
          <path d="M0 479h14v3h5v3h3v5h-3v3h-5v2H0z" fill={color.red} />
          <path d="M74 479H64v3h-6v3H45v5h10v3h8v3h11z" fill={color.green} />
        </Profile>
      </ColumnBack>
      <ColumnBack $w={COLS[4]} $book>
        <Profile><polygon points={profile(ASK_SHAPE)} fill={color.red} /></Profile>
      </ColumnBack>
      <ColumnBack $w={COLS[5]}>
        <Marker $line={color.red} />
        <Delta $side="left" $top={464}>0.5</Delta>
      </ColumnBack>
      <ColumnBack $w={COLS[6]}>
        <Profile>
          <path d="M70 474L52 480 24 487 48 494 70 500z" fill={color.red} />
          <path d="M70 474L58 481 47 487 58 493 70 501z" fill={color.green} />
          <path d="M0 487.500h70" stroke="#b9bdbf" strokeWidth="2" />
        </Profile>
      </ColumnBack>
      <ColumnBack $w={COLS[7]}>
        <Profile>
          <path d="M0 474L10 479 22 484 39 489 24 496 6 500 1 510H0z" fill={color.green} />
          <path d="M77 453V500L65 491 53 487 46 482 53 478 65 473 75 470z" fill={color.red} />
        </Profile>
      </ColumnBack>
    </Columns>
    <Book>
      <colgroup>{COLS.map((w, i) => <col key={i} style={{ width: i === 7 ? w - 2 : w }} />)}</colgroup>
      <thead>
        <tr>
          <Th />
          <Th $end={10}><span>+/- <FilterIcon /></span></Th>
          <Th $center>BID</Th>
          <Th><span>SVP <CrossSquareIcon /></span></Th>
          <Th $center>ASK</Th>
          <Th $end={4}><span>+/- <FilterIcon /></span></Th>
          <Th $end={6}><span>SVP <CalendarIcon /></span></Th>
          <Th><span>SQC <CalendarIcon /></span></Th>
        </tr>
      </thead>
      <tbody>
        <tr><Gap colSpan={8} /></tr>
        {rows.map((r, i) => (
          <tr key={i}>
            <Td $dim>{r.price}</Td>
            <Td />
            <Td>{r.bid}</Td>
            <Td>{r.svp && <Pair><span>{r.svp[0]}</span><span>{r.svp[1]}</span></Pair>}</Td>
            <Td $align="left">{r.ask}</Td>
            <Td $align="left">{r.change}</Td>
            <Td>{r.session}</Td>
            <Td><Pair><span>{r.counts[0]}</span><span>{r.counts[1]}</span></Pair></Td>
          </tr>
        ))}
      </tbody>
    </Book>
  </Ladder>
);

const icon = { size: 22, strokeWidth: 1.4 };

const HandIcon = () => (
  <svg width="20" height="20" viewBox="0 0 20 20" fill="none" stroke="currentColor" strokeWidth="1.400" strokeLinejoin="round">
    <path d="M6.500 12.500V2.300a1.600 1.600 0 0 1 3.200 0V8l7.300 2.200q2 .8 1.700 2.800l-1 4.500q-.5 2-2.500 2H9.500q-1.300 0-2.300-1L.8 12.800q.4-2.300 2.500-1.800z" />
  </svg>
);
const TargetIcon = () => (
  <svg width="20" height="20" viewBox="0 0 20 20" fill="none" stroke="currentColor" strokeWidth="1.300">
    <circle cx="10" cy="10" r="8" /><path d="M10 6v8M6 10h8M1 4V1h3M16 1h3v3M19 16v3h-3M4 19H1v-3" />
  </svg>
);
const ScopeIcon = () => (
  <svg width="18" height="22" viewBox="0 0 18 22" fill="none" stroke="currentColor" strokeWidth="1.300" strokeLinejoin="round">
    <path d="M5 9.500L11.500 1.500l3.500 2.500-6.500 8zM4 10l5 3.500M13 0l3.500 2.500M15 6q2.500 4.500-2 9.500M0 15.500h13M5.500 16v2M5 21.300h9l-2-4.300H7z" />
  </svg>
);
const PencilIcon = () => (
  <svg width="20" height="20" viewBox="0 0 20 20" fill="none" stroke="currentColor" strokeWidth="1.300" strokeLinejoin="round">
    <path d="M1 19l1.500-6L13 2q2-2 4.500-.5Q20 4 18 6.500L7 17zM2.500 13L7 17M5 15L15.500 4M11.500 3.500l5 4.500" />
  </svg>
);
const CascadeIcon = () => (
  <svg width="20" height="20" viewBox="0 0 20 20" fill="none" stroke="currentColor" strokeWidth="1.300">
    <path d="M1 1h9v4H1zM5 8h9v4H5zM10 15h9v4h-9zM2.500 5v5H5M7 12v5h3" />
  </svg>
);
const ChatIcon = () => (
  <svg width="20" height="20" viewBox="0 0 20 20" fill="none" stroke="currentColor" strokeWidth="1.300">
    <path d="M1.500 18.500l1.500-3.500a8.500 8.500 0 1 1 3 2.800z" /><path d="M6 7h8M6 13h8" /><path d="M5.500 10h9" strokeWidth="2" opacity=".6" />
  </svg>
);
const CrossIcon = () => (
  <svg width="22" height="22" viewBox="0 0 22 22" stroke="currentColor" strokeWidth="1.300"><path d="M11 0v7M11 15v7M0 11h7M15 11h7" /></svg>
);
const SeriesIcon = () => (
  <svg width="24" height="20" viewBox="0 0 24 20" fill="none" stroke="currentColor" strokeWidth="1.300">
    <circle cx="3" cy="14" r="1.800" /><circle cx="7.500" cy="8" r="1.800" /><circle cx="14" cy="17" r="1.800" /><circle cx="22" cy="4" r="1.800" />
    <path d="M4 12.500l2.500-3M8.500 9.700l4.500 5.800M14.800 15.300L21.200 5.700M12 2h4M12 5h4M12 8h4" />
  </svg>
);
const BrightnessIcon = () => (
  <svg width="12" height="12" viewBox="0 0 12 12" stroke="#e6ecef" fill="none">
    <circle cx="6" cy="6" r="3" /><path d="M6 3a3 3 0 0 1 0 6z" fill="#fff" /><path d="M6 0v2M6 10v2M0 6h2M10 6h2M2 2l1 1M10 2L9 3M2 10l1-1M10 10L9 9" strokeWidth=".7" />
  </svg>
);
const ContrastIcon = () => (
  <svg width="12" height="12" viewBox="0 0 12 12" stroke="#e6ecef" fill="none"><circle cx="6" cy="6" r="5.400" /><path d="M1 4.500h2.500Q6 8 8.500 4.500H11" /></svg>
);

const TIMES = ["08:16", "08:18", "08:20", "08:22", "08:24", "08:26", "08:28", "08:30", "08:32", "08:34", "08:36", "08:38", "08:40"];
const BLUE_SCALE = ["2.5", "2.0", "1.5", "1.0", "0.5", "0.0", "-0.5", "-1.0", "-1.5", "-2.0", "-2.5"];
const GREEN_SCALE = ["50", "45", "40", "35", "30", "25", "20", "15", "10", "5", "0"];

const App: React.FC = () => (
  <Page>
    <GlobalStyle />
    <MenuBar>
      <MenuItem><u>F</u>ile</MenuItem>
      <MenuItem><u>C</u>onnections</MenuItem>
      <MenuItem><u>S</u>ettings</MenuItem>
      <MenuItem><u>H</u>elp</MenuItem>
      <MenuItem $end>Feedback</MenuItem>
    </MenuBar>

    <Toolbar>
      <Tools>
        <Tool aria-label="Pointer"><HandIcon /></Tool>
        <Tool aria-label="Zoom" $wide={47}><TargetIcon /></Tool>
        <Divider />
        <Tool aria-label="Share" $state="filled"><Share2 {...icon} /></Tool>
        <Tool aria-label="Inspect" $wide={47}><ScopeIcon /></Tool>
        <Tool aria-label="Cascade" $wide={38}><CascadeIcon /></Tool>
        <Tool aria-label="Link" $wide={41}><Link {...icon} /></Tool>
        <Divider />
        <Sliders>
          <SliderRow><BrightnessIcon /><Range type="range" aria-label="Brightness" defaultValue={35} $fill={38} /></SliderRow>
          <SliderRow><ContrastIcon /><Range type="range" aria-label="Contrast" defaultValue={22} $fill={28} /></SliderRow>
        </Sliders>
        <Divider />
        <Tool aria-label="Draw"><PencilIcon /></Tool>
        <Tool aria-label="Notes" $state="outlined"><ChatIcon /></Tool>
        <Tool aria-label="Crosshair" $wide={47}><CrossIcon /></Tool>
        <Tool aria-label="Timer" $wide={41}><Timer {...icon} /></Tool>
        <Tool aria-label="Series" $wide={45}><SeriesIcon /></Tool>
        <Divider />
        <Palette aria-label="Heat map colours" aria-haspopup="listbox"><PaletteScale /><Caret /></Palette>
      </Tools>
      <Logo>
        <svg width="24" height="18" fill={color.accent}><path d="M0 0h4v18H0zM6 0h6v18H6zM14 0h9v18h-9z" /></svg>
        BOOKMAP
      </Logo>
    </Toolbar>

    <TabRow>
      <Tab>
        BTCUSDT@BN
        <TabClose aria-label="Close tab">
          <svg width="9" height="9" viewBox="0 0 9 9" stroke="currentColor" strokeWidth="1.400"><path d="M0 0l9 9M9 0L0 9" /></svg>
        </TabClose>
      </Tab>
      <AddTab aria-label="Add tab">
        <svg width="14" height="14" stroke="#dfe6e9" strokeWidth="2"><path d="M7 0v14M0 7h14" /></svg>
      </AddTab>
      <TabActions>
        <Upgrade>UPGRADE</Upgrade>
        <MoreTabs aria-label="More tabs"><ChevronDown size={18} strokeWidth={2.500} color="#cfd8dc" /></MoreTabs>
      </TabActions>
    </TabRow>

    <Workspace>
      <Notes><HeaderBar>CN</HeaderBar></Notes>
      <ChartPane>
        <HeaderBar />
        <HeatMap />
        <UpperFade />
        <UpperNow />
        <VolumeMax>15</VolumeMax>
        <LastSize>7</LastSize>
      </ChartPane>
      <OrderBook />

      <Notes><TimeGutter /></Notes>
      <Lower>
        <TimeAxis>
          <TimeCells>{TIMES.map((t) => <TimeCell key={t}>{t}</TimeCell>)}</TimeCells>
        </TimeAxis>
        <Indicator>
          <CvdPlot />
          <Scales>
            <Scale $color={color.accent} $step={20}>{BLUE_SCALE.map((v) => <li key={v}>{v}</li>)}</Scale>
            <Scale $color={color.cvd} $step={20}>{GREEN_SCALE.map((v) => <li key={v}>{v}</li>)}</Scale>
            <Scale $color="#fff" $step={100}><li>1.0</li><li>0.0</li><li>-1.0</li></Scale>
          </Scales>
          <Fade />
        </Indicator>
        <NowLine />
      </Lower>
      <Widgets>
        <WidgetBar>
          <button aria-label="Collapse panel"><ChevronDown size={17} strokeWidth={2.500} color="#dfe6e9" /></button>
        </WidgetBar>
        <WidgetBody>
          <Gear aria-label="Widget settings"><Settings size={21} strokeWidth={1.500} /></Gear>
          <GaugeBox>
            <GaugeTrack><GaugeFill /></GaugeTrack>
            <GaugeValue>27</GaugeValue>
            <GaugeName>CVD</GaugeName>
          </GaugeBox>
        </WidgetBody>
      </Widgets>
    </Workspace>

    <StatusBar>
      <StatusLeft>
        <Stamp>
          <svg width="13" height="14" viewBox="0 0 13 14">
            <rect width="13" height="14" rx="1" fill="#1c56b8" /><path d="M6 2h2v2H6zM4.500 6H8v5h1v1H4.500v-1H6V7H4.500z" fill="#fff" />
          </svg>
          10-Dec-2020 08:36:54.873 CET
        </Stamp>
        <span>ASK ~0 at 22377</span>
      </StatusLeft>
      <StatusRight>
        <Feed>BN</Feed>
        <span>Data: Live</span>
        <span>Trading: Real</span>
        <Light />
      </StatusRight>
    </StatusBar>
  </Page>
);

export default App;
